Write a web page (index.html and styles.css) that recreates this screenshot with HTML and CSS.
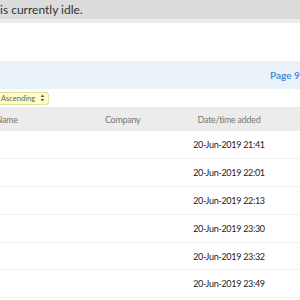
FILE: index.html
```html
<!DOCTYPE html>
<html lang="en">

<head>
  <meta charset="UTF-8" />
  <title>Queue</title>
  <link rel="stylesheet" href="styles.css">
</head>

<body>
  <div class="status-bar">is currently idle.</div>
  <div class="status-shadow"></div>

  <div class="spacer"></div>

  <div class="pager-bar">
    <span class="page-label">Page 9-10</span>
  </div>

  <div class="sort-row">
    <span class="sort-select">
      Ascending
      <svg class="sort-arrows" width="5" height="8" viewBox="0 0 5 8">
        <path d="M0.5 3 L2.5 0.5 L4.5 3 Z M0.5 5 L2.5 7.5 L4.5 5 Z" fill="#666" />
      </svg>
    </span>
  </div>

  <table class="items">
    <thead>
      <tr>
        <th class="col-name">Name</th>
        <th class="col-company">Company</th>
        <th class="col-date">Date/time added</th>
        <th class="col-rest"></th>
      </tr>
    </thead>
    <tbody>
      <tr><td></td><td></td><td class="col-date">20-Jun-2019 21:41</td><td></td></tr>
      <tr><td></td><td></td><td class="col-date">20-Jun-2019 22:01</td><td></td></tr>
      <tr><td></td><td></td><td class="col-date">20-Jun-2019 22:13</td><td></td></tr>
      <tr><td></td><td></td><td class="col-date">20-Jun-2019 23:30</td><td></td></tr>
      <tr><td></td><td></td><td class="col-date">20-Jun-2019 23:32</td><td></td></tr>
      <tr><td></td><td></td><td class="col-date">20-Jun-2019 23:49</td><td></td></tr>
    </tbody>
  </table>
</body>

</html>
```

FILE: styles.css
```css
body {
  font-family: Lato, "Liberation Sans", sans-serif;
  margin: 0;
  width: 360px;
  overflow: hidden;
  color: #333;
}

.status-bar {
  height: 19px;
  line-height: 19px;
  background-color: #dcdcdc;
  font-size: 12px;
  white-space: nowrap;
}

.status-shadow {
  height: 4px;
  background-color: #ececec;
}

.spacer {
  height: 38px;
}

.pager-bar {
  height: 28px;
  background-color: #eaf2fa;
  display: flex;
  align-items: center;
  padding-left: 270px;
}

.page-label {
  color: #4a90d9;
  font-weight: bold;
  font-size: 10px;
  white-space: nowrap;
}

.sort-row {
  height: 18px;
  display: flex;
  align-items: center;
}

.sort-select {
  margin-left: -4px;
  height: 11px;
  display: inline-flex;
  align-items: center;
  gap: 5px;
  font-size: 7.5px;
  padding: 0 3px 0 4px;
  background-color: #ffffc4;
  border: 1px solid #e0e09c;
  border-radius: 3px;
  color: #666;
}

.items {
  border-collapse: collapse;
  width: 360px;
  table-layout: fixed;
}

.items th {
  background-color: #ececec;
  color: #777;
  font-weight: normal;
  font-size: 9px;
  letter-spacing: -0.3px;
  height: 24px;
  text-align: left;
  padding: 0;
  white-space: nowrap;
}

.items td {
  height: 26.9px;
  padding: 0;
  border-bottom: 1px solid #f0f0f0;
  font-size: 9px;
  letter-spacing: -0.3px;
  white-space: nowrap;
}

.col-name {
  width: 105px;
  text-indent: -4.5px;
}

.col-company {
  width: 81px;
}

.items .col-date {
  width: 86px;
  text-align: center;
}

.items td.col-date {
  color: #222;
}
```
